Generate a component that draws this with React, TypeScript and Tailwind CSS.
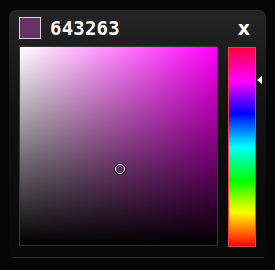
import React from 'react';

const HEX = '643263';
const HUE = 301;
const SAT = 0.5;
const VAL = 100 / 255;

export default function App() {
  const size = 200;
  const markerX = SAT * size;
  const markerY = (1 - VAL) * size;
  const hueY = ((360 - HUE) / 360) * size;

  return (
    <div className="w-[275px] h-[270px] bg-[#050505] pt-[10px] pl-[9px]">
      <div className="relative w-[257px] h-[248px] rounded-t-[7px] bg-gradient-to-b from-[#242424] via-[#121212] via-40% to-[#070707] px-[10px] pt-[7px]">
        <div className="flex items-center h-[22px]">
          <div className="w-[22px] h-[22px] border border-[#d8d8d8] bg-[#643263]" />
          <span
            className="ml-[9px] text-[19px] font-bold text-white leading-none tracking-[0.2px]"
            style={{ fontFamily: '"DejaVu Sans Mono", "Liberation Mono", monospace' }}
          >
            {HEX}
          </span>
          <span
            className="ml-auto mr-[6px] text-[19px] font-bold text-white leading-none"
            style={{ fontFamily: '"DejaVu Sans", "Liberation Sans", sans-serif' }}
          >
            x
          </span>
        </div>

        <div className="flex mt-[7px] gap-[10px]">
          <div className="relative w-[200px] h-[200px] border border-[#353535] bg-[#ff00fb] overflow-hidden">
            <div className="absolute inset-0 bg-gradient-to-r from-white to-transparent" />
            <div className="absolute inset-0 bg-gradient-to-b from-transparent to-black" />
            <div
              className="absolute w-[10px] h-[10px] rounded-full border-[1.5px] border-white shadow-[0_0_0_1px_rgba(0,0,0,0.7)] -translate-x-1/2 -translate-y-1/2"
              style={{ left: markerX, top: markerY }}
            />
          </div>

          <div className="relative mt-px">
            <div className="w-[28px] h-[200px] border border-[#ff3b3b] bg-[linear-gradient(to_bottom,#ff0040_0%,#ff00ff_17%,#0000ff_33%,#00ffff_50%,#00ff00_67%,#ffff00_83%,#ff0000_100%)]" />
            <div
              className="absolute left-[29px] w-0 h-0 border-y-[4px] border-y-transparent border-r-[5px] border-r-white -translate-y-1/2"
              style={{ top: hueY }}
            />
          </div>
        </div>

        <div className="absolute left-[3px] right-[2px] bottom-0 h-px bg-[#2a2a2a]" />
      </div>
    </div>
  );
}
